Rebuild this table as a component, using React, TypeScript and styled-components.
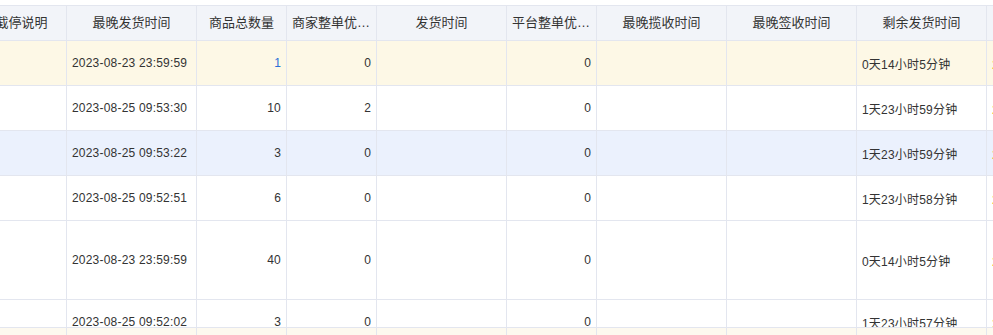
import { useLayoutEffect, useRef } from "react";
import { styled, createGlobalStyle } from "styled-components";

const GlobalStyle = createGlobalStyle`
    html, body {
        margin: 0;
        padding: 0;
        background: #ffffff;
    }
    body {
        font-family: "Liberation Sans", "Noto Sans CJK SC", sans-serif;
        color: #333333;
    }
`;

const COLUMNS = "90px 130px 90px 90px 130px 90px 130px 130px 130px 90px";

type Align = "left" | "right" | "center";

interface IColumn {
    title: string;
    align: Align;
}

interface IRow {
    id: number;
    tone: "plain" | "warn" | "active";
    height: number;
    deadline: string;
    total: string;
    merchant: string;
    platform: string;
    remain: string;
    totalLink?: boolean;
}

const columns: IColumn[] = [
    { title: "截停说明", align: "left" },
    { title: "最晚发货时间", align: "left" },
    { title: "商品总数量", align: "right" },
    { title: "商家整单优惠金额", align: "right" },
    { title: "发货时间", align: "left" },
    { title: "平台整单优惠金额", align: "right" },
    { title: "最晚揽收时间", align: "left" },
    { title: "最晚签收时间", align: "left" },
    { title: "剩余发货时间", align: "left" },
    { title: "发货状态", align: "left" },
];

const rows: IRow[] = [
    { id: 1, tone: "warn", height: 44, deadline: "2023-08-23 23:59:59", total: "1", merchant: "0", platform: "0", remain: "0天14小时5分钟", totalLink: true },
    { id: 2, tone: "plain", height: 44, deadline: "2023-08-25 09:53:30", total: "10", merchant: "2", platform: "0", remain: "1天23小时59分钟" },
    { id: 3, tone: "active", height: 44, deadline: "2023-08-25 09:53:22", total: "3", merchant: "0", platform: "0", remain: "1天23小时59分钟" },
    { id: 4, tone: "plain", height: 44, deadline: "2023-08-25 09:52:51", total: "6", merchant: "0", platform: "0", remain: "1天23小时58分钟" },
    { id: 5, tone: "plain", height: 78, deadline: "2023-08-23 23:59:59", total: "40", merchant: "0", platform: "0", remain: "0天14小时5分钟" },
    { id: 6, tone: "plain", height: 44, deadline: "2023-08-25 09:52:02", total: "3", merchant: "0", platform: "0", remain: "1天23小时57分钟" },
];

const toneColor = {
    plain: "#ffffff",
    warn: "#fdf8e6",
    active: "#ebf1fd",
};

const Page = styled.div`
    padding-top: 5px;
    height: 335px;
    box-sizing: border-box;
`;

const Scroller = styled.div`
    position: relative;
    width: 993px;
    height: 330px;
    overflow: hidden;
`;

const Table = styled.div`
    width: 1100px;
    border-top: 1px solid #e3e6ef;
`;

const HeaderRow = styled.div`
    display: grid;
    grid-template-columns: ${COLUMNS};
    background: #f2f4f9;
    border-bottom: 1px solid #e3e6ef;
`;

const HeaderCell = styled.div`
    height: 34px;
    line-height: 34px;
    padding: 0 5px;
    font-size: 13px;
    color: #333333;
    text-align: center;
    white-space: nowrap;
    overflow: hidden;
    text-overflow: ellipsis;
    border-right: 1px solid #e3e6ef;
`;

const BodyRow = styled.div<{ $tone: IRow["tone"]; $height: number }>`
    display: grid;
    grid-template-columns: ${COLUMNS};
    background: ${(p) => toneColor[p.$tone]};
    border-bottom: 1px solid #e3e6ef;
    height: ${(p) => p.$height}px;
`;

const Cell = styled.div<{ $align: Align; $accent?: boolean; $link?: boolean }>`
    display: flex;
    align-items: center;
    justify-content: ${(p) =>
        p.$align === "right" ? "flex-end" : p.$align === "center" ? "center" : "flex-start"};
    padding: 0 5px;
    font-size: 12px;
    letter-spacing: 0.2px;
    white-space: nowrap;
    overflow: hidden;
    color: ${(p) => (p.$accent ? "#f5a623" : p.$link ? "#2a6fd8" : "#333333")};
    border-right: 1px solid #e3e6ef;
`;

const Footer = styled.div`
    position: absolute;
    top: 322px;
    left: 0;
    display: grid;
    grid-template-columns: ${COLUMNS};
    width: 1100px;
    height: 44px;
    background: #fdf9ef;
    border-top: 1px solid #e3e6ef;
`;

const FooterCell = styled.div`
    border-right: 1px solid #e3e6ef;
`;

export default function App() {
    const scrollRef = useRef<HTMLDivElement>(null);

    // table is scrolled a little to the right
    useLayoutEffect(() => {
        if (scrollRef.current) scrollRef.current.scrollLeft = 23;
    }, []);

    return (
        <>
            <GlobalStyle />
            <Page>
                <Scroller ref={scrollRef}>
                    <Table>
                        <HeaderRow>
                            {columns.map((col) => (
                                <HeaderCell key={col.title}>{col.title}</HeaderCell>
                            ))}
                        </HeaderRow>
                        {rows.map((row) => (
                            <BodyRow key={row.id} $tone={row.tone} $height={row.height}>
                                <Cell $align="left" />
                                <Cell $align="left">{row.deadline}</Cell>
                                <Cell $align="right" $link={row.totalLink}>{row.total}</Cell>
                                <Cell $align="right">{row.merchant}</Cell>
                                <Cell $align="left" />
                                <Cell $align="right">{row.platform}</Cell>
                                <Cell $align="left" />
                                <Cell $align="left" />
                                <Cell $align="left">{row.remain}</Cell>
                                <Cell $align="left" $accent>2天</Cell>
                            </BodyRow>
                        ))}
                    </Table>
                    <Footer>
                        {columns.map((col) => (
                            <FooterCell key={col.title} />
                        ))}
                    </Footer>
                </Scroller>
            </Page>
        </>
    );
}
